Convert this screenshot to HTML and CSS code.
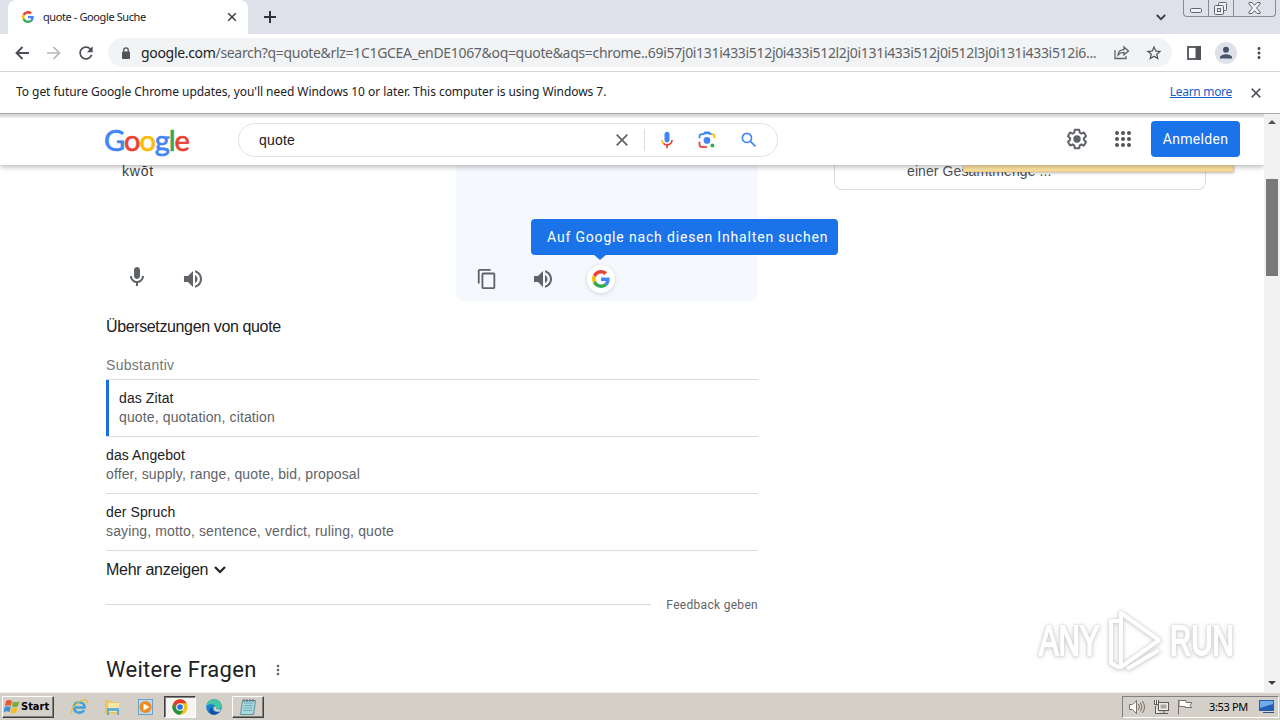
FILE: index.html
```html
<!DOCTYPE html>
<html lang="de">
<head>
    <meta charset="UTF-8">
    <meta name="viewport" content="width=device-width, initial-scale=1.0">
    <title>quote - Google Suche</title>
    <link rel="stylesheet" href="styles.css">
</head>
<body>
    <!-- shared shapes -->
    <svg class="defs" width="0" height="0">
        <symbol id="g-logo" viewBox="0 0 48 48">
            <path fill="#EA4335" d="M24 9.5c3.54 0 6.71 1.22 9.21 3.6l6.85-6.85C35.9 2.38 30.47 0 24 0 14.62 0 6.51 5.38 2.56 13.22l7.98 6.19C12.43 13.72 17.74 9.5 24 9.5z"/>
            <path fill="#4285F4" d="M46.98 24.55c0-1.57-.15-3.09-.38-4.55H24v9.02h12.94c-.58 2.96-2.26 5.48-4.78 7.18l7.73 6c4.51-4.18 7.09-10.36 7.09-17.65z"/>
            <path fill="#FBBC05" d="M10.53 28.59c-.48-1.45-.76-2.99-.76-4.59s.27-3.14.76-4.59l-7.98-6.19C.92 16.46 0 20.12 0 24c0 3.88.92 7.54 2.56 10.78l7.97-6.19z"/>
            <path fill="#34A853" d="M24 48c6.48 0 11.93-2.13 15.89-5.81l-7.73-6c-2.15 1.45-4.92 2.3-8.16 2.3-6.26 0-11.57-4.22-13.47-9.91l-7.98 6.19C6.51 42.62 14.62 48 24 48z"/>
        </symbol>
        <symbol id="close" viewBox="0 0 24 24">
            <path d="M19 6.41L17.59 5 12 10.59 6.41 5 5 6.41 10.59 12 5 17.59 6.41 19 12 13.41 17.59 19 19 17.59 13.41 12z"/>
        </symbol>
        <symbol id="speaker" viewBox="0 0 24 24">
            <path d="M3 9v6h4l5 5V4L7 9H3zm13.5 3c0-1.77-1.02-3.29-2.5-4.03v8.05c1.48-.73 2.5-2.25 2.5-4.02zM14 3.23v2.06c2.89.86 5 3.54 5 6.71s-2.11 5.85-5 6.71v2.06c4.01-.91 7-4.49 7-8.77s-2.99-7.86-7-8.77z"/>
        </symbol>
        <symbol id="dots" viewBox="0 0 24 24">
            <path d="M12 8c1.1 0 2-.9 2-2s-.9-2-2-2-2 .9-2 2 .9 2 2 2zm0 2c-1.1 0-2 .9-2 2s.9 2 2 2 2-.9 2-2-.9-2-2-2zm0 6c-1.1 0-2 .9-2 2s.9 2 2 2 2-.9 2-2-.9-2-2-2z"/>
        </symbol>
    </svg>

    <div class="tabstrip">
        <div class="tab">
            <svg width="12" height="12"><use href="#g-logo"/></svg>
            <span class="tab-title">quote - Google Suche</span>
            <svg class="tab-close" width="14" height="14"><use href="#close"/></svg>
        </div>
        <svg class="new-tab" width="12" height="12" viewBox="0 0 12 12"><path d="M6 0v12M0 6h12" stroke="#303338" stroke-width="2"/></svg>
        <svg class="tab-search" width="10" height="7" viewBox="0 0 10 7"><path d="M.8 1l4.2 4.2L9.200 1" fill="none" stroke="#3c4043" stroke-width="1.8"/></svg>
        <div class="window-buttons">
            <div class="win-min"><svg width="13" height="5"><rect x=".5" y=".5" width="11" height="4" rx="1" fill="#eef0f4" stroke="#60656e"/></svg></div>
            <div class="win-max"><svg width="14" height="13" fill="#eef0f4" stroke="#60656e"><rect x="4.500" y=".5" width="8" height="8" rx="1"/><rect x=".5" y="3.500" width="9" height="9" rx="1"/><rect x="3.500" y="6.500" width="3" height="3"/></svg></div>
            <div class="win-close"><svg width="13" height="12" viewBox="0 0 13 12"><path d="M1 .5h3l2.500 2.800L9 .5h3v1.500L8.600 6l3.400 4v1.500H9L6.500 8.700 4 11.500H1V10l3.400-4L1 2z" fill="#eef0f4" stroke="#60656e"/></svg></div>
        </div>
    </div>

    <div class="toolbar">
        <svg class="back" width="14" height="14" viewBox="0 0 14 14"><path d="M14 7H1.500M7.500 1l-6 6 6 6" fill="none" stroke="#4b4f54" stroke-width="1.900"/></svg>
        <svg class="forward" width="14" height="14" viewBox="0 0 14 14"><path d="M0 7h12.500M6.500 1l6 6-6 6" fill="none" stroke="#b4b6b9" stroke-width="1.700"/></svg>
        <svg class="reload" width="20" height="20" viewBox="0 0 24 24" fill="#4b4f54"><path d="M17.650 6.350C16.200 4.900 14.210 4 12 4c-4.420 0-7.990 3.580-7.990 8s3.570 8 7.990 8c3.730 0 6.840-2.550 7.730-6h-2.080c-.82 2.330-3.040 4-5.650 4-3.310 0-6-2.690-6-6s2.690-6 6-6c1.660 0 3.140.69 4.220 1.780L13 11h7V4l-2.350 2.350z"/></svg>
        <div class="omnibox">
            <svg class="lock" width="10" height="12" viewBox="0 0 10 12"><rect x="1" y="4.500" width="8" height="7.500" rx="1" fill="#50545a"/><path d="M2.800 5V3a2.200 2.200 0 0 1 4.400 0v2" fill="none" stroke="#50545a" stroke-width="1.300"/></svg>
            <span class="url"><b>google.com</b>/search?q=quote&amp;rlz=1C1GCEA_enDE1067&amp;oq=quote&amp;aqs=chrome..69i57j0i131i433i512j0i433i512l2j0i131i433i512j0i512l3j0i131i433i512i6...</span>
            <svg class="share" width="16" height="15" viewBox="0 0 16 15" fill="none" stroke="#5f6368" stroke-width="1.300"><path d="M1 5v8.500h11V11M4 10c.3-3.500 2.500-5.300 6-5.400V2l4.500 4L10 9.800V7.300c-2.700 0-4.500.8-6 2.700z"/></svg>
            <svg class="star" width="18" height="18" viewBox="0 0 24 24" fill="#4b4f54"><path d="M22 9.240l-7.190-.62L12 2 9.190 8.630 2 9.240l5.460 4.730L5.820 21 12 17.270 18.180 21l-1.630-7.030L22 9.240zM12 15.400l-3.760 2.270 1-4.280-3.320-2.880 4.380-.38L12 6.100l1.710 4.040 4.380.38-3.320 2.880 1 4.280L12 15.400z"/></svg>
        </div>
        <svg class="sidepanel" width="14" height="14"><rect x="1" y="1" width="12" height="12" fill="none" stroke="#50545a" stroke-width="1.800"/><rect x="8.500" y="0" width="5.500" height="14" fill="#50545a"/></svg>
        <svg class="avatar" width="22" height="22"><circle cx="11" cy="11" r="11" fill="#dee1e9"/><circle cx="11" cy="7.800" r="3" fill="#47536b"/><path d="M5 16.500v-1.300c0-2 4-3 6-3s6 1 6 3v1.300z" fill="#47536b"/></svg>
        <svg class="menu" width="18" height="18" fill="#4b4f54"><use href="#dots"/></svg>
    </div>

    <div class="infobar">
        <span class="info-text">To get future Google Chrome updates, you'll need Windows 10 or later. This computer is using Windows 7.</span>
        <a class="learn-more">Learn more</a>
        <svg width="16" height="16" fill="#50545a" stroke="#50545a" stroke-width=".6"><use href="#close"/></svg>
    </div>

    <div class="viewport">
        <div class="page">
            <header class="search-header">
                <div class="logo"><span class="blue">G</span><span class="red">o</span><span class="yellow">o</span><span class="blue">g</span><span class="green">l</span><span class="red">e</span></div>
                <div class="searchbox">
                    <span class="query">quote</span>
                    <svg class="clear" width="20" height="20" viewBox="0 0 20 20"><path d="M4.700 4.700l10.600 10.600M15.300 4.700L4.700 15.300" stroke="#5f6368" stroke-width="1.700"/></svg>
                    <span class="divider"></span>
                    <svg class="mic" width="20" height="20" viewBox="0 0 24 24"><path fill="#4285f4" d="M12 15c1.660 0 3-1.310 3-2.970v-7.020C15 3.340 13.660 2 12 2S9 3.340 9 5.010v7.020C9 13.690 10.340 15 12 15z"/><path fill="#ea4335" d="M11 18.080h2V22h-2z"/><path fill="#fbbc05" d="M7.050 16.870C5.780 15.610 5 13.920 5 12H7c0 1.450.56 2.420 1.470 3.380z"/><path fill="#ea4335" d="M12 16.930a5 5 0 0 1-3.540-1.550l-1.410 1.490A6.900 6.900 0 0 0 12 18.920c3.870 0 6.990-2.920 6.990-6.920H17c0 2.920-2.240 4.930-5 4.930z"/></svg>
                    <svg class="lens" width="20" height="20" viewBox="0 0 24 24" fill="none" stroke-width="2.200"><path stroke="#4285f4" d="M3 10V8a3 3 0 0 1 3-3h2l1.500-2h5L16 5h2"/><path stroke="#fbbc05" d="M17 5h1a3 3 0 0 1 3 3v2"/><path stroke="#ea4335" d="M3 14v3a3.500 3.500 0 0 0 3.500 3.500H12"/><circle cx="12" cy="12.500" r="4" fill="#4285f4"/><circle cx="18.500" cy="18.500" r="2.400" fill="#34a853"/><path fill="#4285f4" d="M8 5l1.500-2.500h5L16 5z"/></svg>
                    <svg class="find" width="20" height="20" viewBox="0 0 24 24" fill="#4285f4"><path d="M20.490 19l-5.730-5.730C15.530 12.200 16 10.910 16 9.500A6.500 6.500 0 1 0 9.500 16c1.410 0 2.700-.47 3.770-1.240L19 20.490 20.490 19zM5 9.500C5 7.010 7.010 5 9.500 5S14 7.010 14 9.500 11.990 14 9.500 14 5 11.990 5 9.500z"/></svg>
                </div>
                <svg class="settings" width="24" height="24" viewBox="0 0 24 24"><path d="M13.850 22.250h-3.700c-.74 0-1.360-.54-1.450-1.270l-.27-1.890c-.27-.14-.53-.29-.79-.46l-1.800.72c-.7.26-1.470-.03-1.810-.65L2.200 15.530c-.35-.66-.2-1.440.36-1.880l1.530-1.190c-.01-.15-.02-.3-.02-.46 0-.15.01-.31.02-.46l-1.520-1.190c-.59-.45-.74-1.260-.37-1.880l1.850-3.190c.34-.62 1.110-.9 1.790-.63l1.810.73c.26-.17.52-.32.78-.46l.27-1.910c.09-.7.710-1.250 1.440-1.250h3.700c.74 0 1.360.54 1.450 1.270l.27 1.890c.27.14.53.29.79.46l1.800-.72c.71-.26 1.480.03 1.820.65l1.840 3.180c.36.66.2 1.440-.36 1.880l-1.520 1.190c.01.15.02.3.02.46s-.01.31-.02.46l1.520 1.190c.56.45.72 1.230.37 1.860l-1.860 3.220c-.34.62-1.110.9-1.800.63l-1.800-.72c-.26.17-.52.32-.78.46l-.27 1.910c-.1.680-.72 1.220-1.460 1.220zm-3.230-2h2.760l.37-2.550.53-.22c.44-.18.88-.44 1.340-.78l.45-.34 2.380.96 1.380-2.400-2.030-1.580.07-.56c.03-.26.06-.51.06-.78s-.03-.53-.06-.78l-.07-.56 2.030-1.580-1.390-2.400-2.390.96-.45-.35c-.42-.32-.87-.58-1.330-.77l-.52-.22-.37-2.550h-2.760l-.37 2.550-.53.210c-.44.190-.88.440-1.340.79l-.45.330-2.380-.95-1.390 2.390 2.030 1.580-.07.56a7 7 0 0 0-.06.79c0 .26.020.53.06.78l.07.56-2.030 1.580 1.380 2.400 2.390-.96.45.35c.43.330.86.580 1.330.77l.53.220z" fill="#5f6368"/><circle cx="12" cy="12" r="3.700" fill="#5f6368"/></svg>
                <svg class="apps" width="16" height="16" viewBox="0 0 16 16" fill="#50545a"><circle cx="2" cy="2" r="2"/><circle cx="8" cy="2" r="2"/><circle cx="14" cy="2" r="2"/><circle cx="2" cy="8" r="2"/><circle cx="8" cy="8" r="2"/><circle cx="14" cy="8" r="2"/><circle cx="2" cy="14" r="2"/><circle cx="8" cy="14" r="2"/><circle cx="14" cy="14" r="2"/></svg>
                <a class="signin">Anmelden</a>
            </header>

            <div class="results">
                <main class="main-column">
                    <section class="translator">
                        <div class="source">
                            <div class="phonetic">kwōt</div>
                            <div class="source-tools">
                                <svg width="24" height="24" viewBox="0 0 24 24" fill="#5f6368"><path d="M12 14c1.660 0 3-1.340 3-3V5c0-1.660-1.340-3-3-3S9 3.340 9 5v6c0 1.660 1.340 3 3 3zm5-3c0 2.760-2.240 5-5 5s-5-2.240-5-5H5c0 3.530 2.610 6.430 6 6.920V21h2v-3.080c3.390-.49 6-3.390 6-6.920h-2z"/></svg>
                                <svg class="listen" width="24" height="24" fill="#5f6368"><use href="#speaker"/></svg>
                            </div>
                        </div>
                        <div class="target">
                            <svg class="copy" width="22" height="22" viewBox="0 0 24 24" fill="#5f6368"><path d="M16 1H4c-1.100 0-2 .9-2 2v14h2V3h12V1zm3 4H8c-1.100 0-2 .9-2 2v14c0 1.100.9 2 2 2h11c1.100 0 2-.9 2-2V7c0-1.100-.9-2-2-2zm0 16H8V7h11v14z"/></svg>
                            <svg class="listen" width="24" height="24" fill="#5f6368"><use href="#speaker"/></svg>
                            <div class="search-this">
                                <svg width="18" height="18"><use href="#g-logo"/></svg>
                                <div class="tooltip">Auf Google nach diesen Inhalten suchen</div>
                            </div>
                        </div>
                    </section>

                    <h3 class="translations-title">Übersetzungen von quote</h3>
                    <div class="word-class">Substantiv</div>
                    <ul class="translations">
                        <li class="selected">
                            <div class="word">das Zitat</div>
                            <div class="meanings">quote, quotation, citation</div>
                        </li>
                        <li>
                            <div class="word">das Angebot</div>
                            <div class="meanings">offer, supply, range, quote, bid, proposal</div>
                        </li>
                        <li>
                            <div class="word">der Spruch</div>
                            <div class="meanings">saying, motto, sentence, verdict, ruling, quote</div>
                        </li>
                    </ul>
                    <div class="show-more"><span>Mehr anzeigen</span><svg width="12" height="8" viewBox="0 0 12 8"><path d="M1 1l5 5 5-5" fill="none" stroke="#202124" stroke-width="2.200"/></svg></div>
                    <div class="feedback"><span class="rule"></span><span class="feedback-text">Feedback geben</span></div>
                    <div class="questions"><h2>Weitere Fragen</h2><svg width="16" height="16" fill="#5f6368"><use href="#dots"/></svg></div>
                </main>
                <aside class="side-card">
                    <span>einer Gesamtmenge ...</span>
                    <div class="notice"></div>
                </aside>
            </div>
        </div>
        <div class="scrollbar">
            <span class="arrow-up"></span>
            <span class="thumb"></span>
            <span class="arrow-down"></span>
        </div>
        <div class="watermark">
            <span>ANY</span>
            <svg width="58" height="64" viewBox="0 0 58 64" fill="none" stroke="#fff" stroke-width="4" stroke-linejoin="round"><path d="M12 12H4v42l9 5M14 4v54l38-27z"/><path d="M20 60l32-19"/></svg>
            <span>RUN</span>
        </div>
    </div>

    <div class="taskbar">
        <div class="start">
            <svg width="18" height="18" viewBox="0 0 18 18"><path d="M3 3c2-1.500 4-1.500 6 0L8 8C6 7 4 7 2 8z" fill="#e5592b"/><path d="M10 3.500c2 1 4 1 6.500-.5l-1.500 5c-2 1.500-4 1.500-6 .5z" fill="#76ad3b"/><path d="M1.700 9c2-1.300 4-1 6 0l-1.200 5c-2-1-4-1-6 .2z" fill="#3e8dd8"/><path d="M8.700 9.500c2 1 4 1 6-.3l-1.400 5c-2 1.300-4 1.300-6 .3z" fill="#f4bd24"/></svg>
            <span>Start</span>
        </div>
        <svg class="ie" width="18" height="18" viewBox="0 0 18 18" fill="none"><path d="M3.500 9.500h11c0-7-10.500-7-10.500 0 0 6 8 6.500 10 2.500" stroke="#3da3dc" stroke-width="2.600"/><path d="M2 15.500C-1 12 11-.5 16.500 2.500c1 .6.6 2-.2 3" stroke="#e7bd3a" stroke-width="1.300"/></svg>
        <svg class="explorer" width="18" height="18" viewBox="0 0 18 18"><path d="M2 2h5l1 2h7v12H2z" fill="#e8c667"/><path d="M5 5h11v9H5z" fill="#f9e8a4"/><path d="M4 10h12v7h-2v-4H6v4H4z" fill="#63add9"/></svg>
        <svg class="media" width="16" height="16" viewBox="0 0 16 16"><rect x=".5" y=".5" width="14" height="15" fill="#b9d9ee" stroke="#6ba0c9"/><circle cx="7.500" cy="8" r="6" fill="#f08a1d"/><path d="M5.500 4.500l6 3.500-6 3.500z" fill="#fff"/></svg>
        <div class="task active">
            <svg width="16" height="16" viewBox="0 0 48 48"><circle cx="24" cy="24" r="23" fill="#fbc116"/><path d="M4.100 12.500A23 23 0 0 1 44 12.500H24L14 29.800z" fill="#e33b2e"/><path d="M4.100 12.500L14 29.800 24 35.500h10L24 47A23 23 0 0 1 4.100 12.500z" fill="#229342"/><circle cx="24" cy="24" r="11.500" fill="#fff"/><circle cx="24" cy="24" r="8.500" fill="#1a73e8"/></svg>
        </div>
        <svg class="edge" width="16" height="16" viewBox="0 0 16 16"><circle cx="8" cy="8" r="7.800" fill="#1583d0"/><path d="M.5 7C1 2.500 4.500.2 8 .2c4.500 0 7.800 3.300 7.800 6.500 0 3-4 4.300-5.800 2.800C11 6 4.500 3.500.5 7z" fill="#45c5a2"/><path d="M6.500 8c-1.500 4 3 6.500 7.500 4.500-2 3-6 4-9 2.500C2 12.500 4 8.500 6.500 8z" fill="#174f9e"/><path d="M8 7.500c2-.5 2.500 1 2 2.200 1 1 3 1 4.800.3l-1 2.400c-3.500 1.100-7.500-1-5.800-4.900z" fill="#d6d1c8"/></svg>
        <div class="task">
            <svg width="18" height="18" viewBox="0 0 18 18"><path d="M3.500 2.500h13l-2 14h-13z" fill="#a9dbe2" stroke="#62909c"/><path d="M5 5h9M4.700 7.500h9M4.300 10h9M4 12.500h9" stroke="#6fa6b6"/><path d="M5 1v3M8 1v3M11 1v3M14 1v3" stroke="#59666e"/></svg>
        </div>
        <div class="tray">
            <svg class="volume" width="18" height="16" viewBox="0 0 18 16" fill="none" stroke="#77736c"><path d="M1.500 5.500h3l4-4v13l-4-4h-3z" fill="#fff"/><path d="M10.500 5q2 3 0 6M12.500 3.500q3 4.500 0 9M14.500 2q4 6 0 12"/></svg>
            <svg class="network" width="17" height="16" viewBox="0 0 17 16" fill="#eeece7" stroke="#5e5b56"><rect x="5.500" y="3.500" width="10" height="8"/><path d="M7 14.500h8M11 12v2M2.500 7v7.500H7M1.500 1v4.500h4V1M3.500 1v4"/><rect x="7.500" y="5.500" width="6" height="4" fill="#aaa7a2" stroke="none"/></svg>
            <svg class="flag" width="17" height="16" viewBox="0 0 17 16" fill="#fff" stroke="#77736c"><path d="M1.500 1v14.500M2 1.500h7v2h6l-2 3 2 2H8v-1H2z"/></svg>
            <span class="clock">3:53 PM</span>
            <svg class="desktop" width="16" height="15" viewBox="0 0 16 15"><rect x="0" y="1" width="15" height="11" fill="#255eb5"/><path d="M1 2h13v3L1 9z" fill="#6eacea"/><path d="M4 13.500h11" stroke="#344f80"/></svg>
        </div>
    </div>
</body>
</html>
```
FILE: styles.css
```css
* {
    box-sizing: border-box;
}
body {
    margin: 0;
    width: 1280px;
    height: 720px;
    overflow: hidden;
    display: flex;
    flex-direction: column;
    background: #fff;
    color: #202124;
    font-family: "Liberation Sans", Arial, sans-serif;
}
svg {
    display: block;
    flex: none;
}
span, a {
    white-space: nowrap;
}
.defs {
    position: absolute;
}

/* browser window */
.tabstrip {
    height: 34px;
    flex: none;
    display: flex;
    align-items: flex-start;
    background: #dee1e9;
    padding-left: 8px;
}
.tab {
    width: 240px;
    height: 34px;
    display: flex;
    align-items: center;
    padding: 0 9px 0 14px;
    background: #fff;
    border-radius: 8px 8px 0 0;
}
.tab-title {
    margin: 0 0 2px 9px;
    flex: 1;
    font: 11px "Noto Sans", Tahoma, sans-serif;
    letter-spacing: -0.4px;
}
.tab-close {
    fill: #3c4043;
    stroke: #3c4043;
    stroke-width: 0.8px;
}
.new-tab {
    margin: 11px 0 0 16px;
}
.tab-search {
    margin: 14px 17px 0 auto;
}
.window-buttons {
    display: flex;
    width: 93px;
    height: 17px;
    margin-right: 4px;
    border: 1px solid #868b95;
    border-top: 0;
    border-radius: 0 0 4px 4px;
}
.win-min {
    width: 25px;
    padding: 8px 0 0 6px;
    border-right: 1px solid #868b95;
}
.win-max {
    width: 25px;
    padding: 2px 0 0 5px;
    border-right: 1px solid #868b95;
}
.win-close {
    padding: 2px 0 0 14px;
}
.toolbar {
    height: 38px;
    flex: none;
    display: flex;
    align-items: center;
    padding-left: 15px;
    border-bottom: 1px solid #d5d7da;
}
.forward {
    margin-left: 18px;
}
.reload {
    margin-left: 15px;
}
.omnibox {
    display: flex;
    align-items: center;
    width: 1064px;
    height: 29px;
    margin-left: 12px;
    padding-left: 13px;
    background: #f1f3f4;
    border-radius: 15px;
}
.url {
    width: 957px;
    margin-left: 10px;
    font: 14px "Noto Sans", Tahoma, sans-serif;
    color: #5f6368;
    letter-spacing: -0.32px;
}
.url b {
    color: #202124;
    font-weight: normal;
}
.share {
    margin-left: 16px;
}
.star {
    margin-left: 15px;
}
.sidepanel {
    margin-left: 15px;
}
.avatar {
    margin-left: 14px;
}
.menu {
    margin-left: 13px;
}
.infobar {
    height: 41px;
    flex: none;
    display: flex;
    align-items: center;
    padding: 0 16px;
    font: 12px "Noto Sans", Tahoma, sans-serif;
}
.info-text {
    flex: 1;
    padding-bottom: 2px;
    letter-spacing: -0.05px;
}
.learn-more {
    margin-right: 16px;
    padding-bottom: 2px;
    letter-spacing: -0.3px;
    color: #1a5dc8;
    text-decoration: underline;
}

/* web page */
.viewport {
    position: relative;
    height: 579px;
    flex: none;
    display: flex;
    border-top: 1px solid #a8abae;
    box-shadow: inset 0 3px 0 #dfe1e2;
}
.page {
    width: 1264px;
    display: flex;
    flex-direction: column;
}
.search-header {
    position: relative;
    z-index: 2;
    height: 51px;
    flex: none;
    display: flex;
    align-items: center;
    padding-left: 104px;
    background: linear-gradient(#cfd1d2, #e4e5e6 3px, #fff 4px);
    box-shadow: 0 1px 6px rgba(32, 33, 36, 0.4);
    clip-path: inset(0 0 -8px 0);
}
.logo {
    display: flex;
    width: 86px;
    font: 29px/34px Lato, sans-serif;
    letter-spacing: -1.1px;
    -webkit-text-stroke: 0.7px;
}
.blue { color: #4285f4; }
.red { color: #ea4335; }
.yellow { color: #fbbc05; }
.green { color: #34a853; }
.searchbox {
    display: flex;
    align-items: center;
    width: 540px;
    height: 34px;
    margin-left: 48px;
    padding-left: 20px;
    border: 1px solid #dfe1e5;
    border-radius: 17px;
}
.query {
    width: 353px;
    font-size: 14px;
    letter-spacing: 0.2px;
}
.divider {
    width: 1px;
    height: 22px;
    margin: 0 12px;
    background: #dadce0;
}
.lens {
    margin-left: 20px;
}
.find {
    margin-left: 22px;
}
.settings {
    margin: 0 0 2px 287px;
}
.apps {
    margin: 0 0 2px 26px;
}
.signin {
    width: 89px;
    height: 36px;
    margin: 0 0 2px 20px;
    border-radius: 4px;
    background: #1a73e8;
    color: #fff;
    font: 14px/36px Roboto, sans-serif;
    letter-spacing: 0.3px;
    text-align: center;
}
.results {
    height: 527px;
    overflow: hidden;
    display: flex;
    align-items: flex-start;
    padding-left: 106px;
}
.main-column {
    width: 652px;
}
.translator {
    display: flex;
    height: 136px;
}
.source {
    width: 350px;
    padding-left: 16px;
}
.phonetic {
    height: 16px;
    font-size: 14px;
    line-height: 12px;
    letter-spacing: 0.8px;
    color: #3c4043;
}
.source-tools {
    display: flex;
    align-items: flex-start;
    margin: 84px 0 0 3px;
}
.source-tools .listen {
    margin: 2px 0 0 32px;
}
.target {
    width: 302px;
    display: flex;
    align-items: flex-start;
    padding: 103px 0 0 20px;
    background: #f5f8fc;
    border-radius: 0 0 8px 8px;
}
.target .listen {
    margin: -1px 0 0 33px;
}
.search-this {
    position: relative;
    width: 28px;
    height: 28px;
    margin: -3px 0 0 32px;
    padding: 5px;
    border-radius: 50%;
    background: #fff;
    box-shadow: 0 1px 4px rgba(60, 64, 67, 0.2);
}
.tooltip {
    position: absolute;
    left: -56px;
    top: -46px;
    width: 307px;
    height: 36px;
    border-radius: 4px;
    background: #1a73e8;
    color: #fff;
    font: 14px/36px Roboto, sans-serif;
    letter-spacing: 0.83px;
    padding-left: 16px;
    white-space: nowrap;
}
.tooltip::after {
    content: "";
    position: absolute;
    left: 62px;
    top: 35px;
    border: 7px solid transparent;
    border-top: 6px solid #1a73e8;
    border-bottom: 0;
}
.translations-title {
    margin: 15px 0 0;
    font-size: 16px;
    line-height: 22px;
    font-weight: normal;
    letter-spacing: -0.37px;
}
.word-class {
    margin: 17px 0 4px;
    font-size: 14px;
    line-height: 20px;
    letter-spacing: 0.3px;
    color: #70757a;
}
.translations {
    margin: 0;
    padding: 0;
    list-style: none;
}
.translations li {
    height: 57px;
    padding-top: 9px;
    border-top: 1px solid #dadce0;
    font-size: 14px;
    line-height: 19px;
}
.translations .selected {
    padding-left: 13px;
    background: linear-gradient(#1a6fe0, #1a6fe0) no-repeat 0 0 / 3px 100%;
}
.word {
    letter-spacing: 0.1px;
}
.meanings {
    color: #5f6368;
    letter-spacing: 0.13px;
}
.show-more {
    display: flex;
    align-items: center;
    gap: 6px;
    height: 38px;
    border-top: 1px solid #dadce0;
    font-size: 16px;
    letter-spacing: -0.28px;
}
.feedback {
    display: flex;
    align-items: center;
    justify-content: space-between;
    height: 32px;
}
.rule {
    width: 545px;
    height: 1px;
    background: #dadce0;
}
.feedback-text {
    padding-top: 2px;
    font: 12px Roboto, sans-serif;
    letter-spacing: 0.3px;
    color: #5f6368;
}
.questions {
    display: flex;
    align-items: center;
    margin-top: 35px;
}
.questions h2 {
    margin: 0 13px 0 0;
    font: 22px/30px Roboto, sans-serif;
    letter-spacing: 0.3px;
}
.side-card {
    position: relative;
    width: 372px;
    height: 25px;
    margin-left: 76px;
    padding-left: 72px;
    border: 1px solid #dadce0;
    border-top: 0;
    border-radius: 0 0 8px 8px;
    color: #4d5156;
    font-size: 14px;
    line-height: 12px;
    letter-spacing: 0.1px;
}
.notice {
    position: absolute;
    left: 128px;
    top: 0;
    width: 271px;
    height: 7px;
    background: #fee3a0;
    border: 1px solid #f3cf86;
    border-top: 0;
    box-shadow: 0 1px 3px rgba(0, 0, 0, 0.3);
}
.scrollbar {
    width: 16px;
    display: flex;
    flex-direction: column;
    align-items: center;
    background: #f1f1f1;
}
.arrow-up {
    margin-top: 6px;
    border: 4px solid transparent;
    border-top: 0;
    border-bottom-color: #505050;
}
.thumb {
    width: 12px;
    height: 97px;
    margin-top: 55px;
    background: #787878;
}
.arrow-down {
    margin: auto 0 7px;
    border: 4px solid transparent;
    border-bottom: 0;
    border-top-color: #404040;
}
.watermark {
    position: absolute;
    left: 1039px;
    top: 495px;
    display: flex;
    align-items: center;
    gap: 5px;
    color: #fff;
    font: 42px "Liberation Sans Narrow", "Liberation Sans", sans-serif;
    filter: drop-shadow(0 0 1px #ccc) drop-shadow(0 1px 2px #d4d4d4);
}
.watermark span {
    width: 63px;
    transform: scaleX(0.7);
    transform-origin: left;
    -webkit-text-stroke: 2px #fff;
}

/* taskbar */
.taskbar {
    height: 28px;
    flex: none;
    display: flex;
    align-items: center;
    padding: 0 1px 0 2px;
    background: #d4d0c8;
    border-top: 1px solid #f3f2ef;
}
.start {
    display: flex;
    align-items: center;
    width: 52px;
    height: 22px;
    border: 1px solid;
    border-color: #fff #404040 #404040 #fff;
    box-shadow: inset -1px -1px 0 #808080;
    font: bold 11px "DejaVu Sans Condensed", Tahoma, sans-serif;
    color: #000;
}
.ie {
    margin-left: 16px;
}
.explorer {
    margin-left: 15px;
}
.media {
    margin: 0 10px 0 17px;
}
.task {
    width: 32px;
    height: 22px;
    display: flex;
    align-items: center;
    justify-content: center;
    border: 1px solid;
    border-color: #fff #404040 #404040 #fff;
    box-shadow: inset -1px -1px 0 #808080;
}
.task.active {
    background: #f6f5f3;
    border-color: #404040 #fff #fff #404040;
    box-shadow: inset 1px 1px 0 #808080;
}
.edge {
    margin: 0 10px;
}
.tray {
    display: flex;
    align-items: center;
    width: 157px;
    height: 22px;
    margin-left: auto;
    padding-left: 5px;
    border: 1px solid;
    border-color: #808080 #fff #fff #808080;
}
.network {
    margin-left: 7px;
}
.flag {
    margin-left: 7px;
}
.clock {
    margin-left: 15px;
    width: 41px;
    font: 11px "Noto Sans", Tahoma, sans-serif;
    letter-spacing: -0.35px;
    color: #000;
}
.desktop {
    margin-left: 9px;
}
```
